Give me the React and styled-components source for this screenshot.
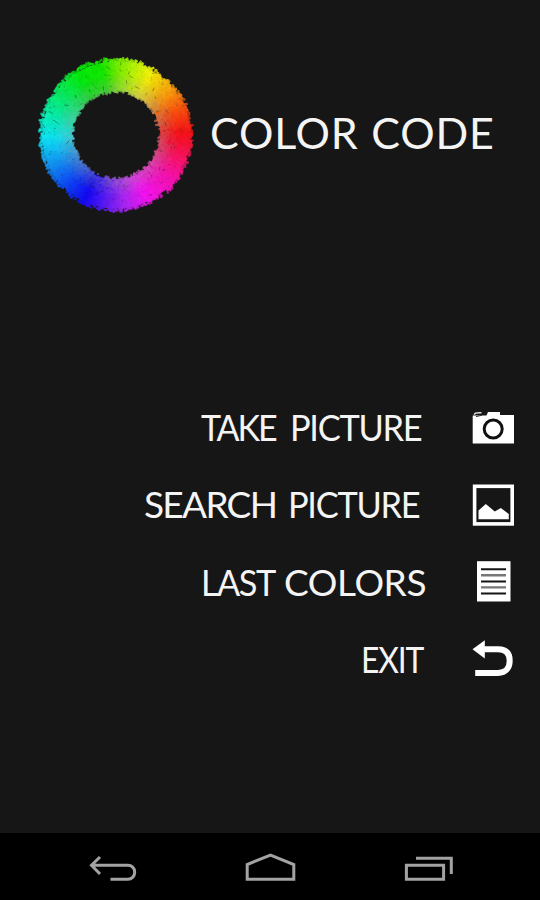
import styled, { createGlobalStyle } from 'styled-components';

const hues = [
  [0, [112, 245, 0]],
  [14, [185, 250, 10]],
  [30, [250, 245, 10]],
  [50, [255, 165, 15]],
  [68, [255, 85, 15]],
  [88, [255, 20, 25]],
  [108, [255, 20, 95]],
  [128, [255, 20, 180]],
  [155, [250, 20, 250]],
  [172, [180, 40, 250]],
  [188, [100, 30, 250]],
  [206, [20, 10, 250]],
  [225, [15, 75, 250]],
  [245, [20, 150, 250]],
  [268, [15, 235, 250]],
  [288, [10, 245, 175]],
  [310, [10, 240, 90]],
  [328, [5, 240, 15]],
  [348, [20, 240, 0]],
  [360, [112, 245, 0]],
];

const hueAt = (angle) => {
  const i = Math.max(hues.findIndex(([a]) => a >= angle), 1);
  const [a1, c1] = hues[i];
  const [a0, c0] = hues[i - 1];
  const t = (angle - a0) / (a1 - a0);
  return c0.map((v, k) => v + (c1[k] - v) * t);
};

const toXY = (angle, radius) => {
  const rad = (angle * Math.PI) / 180;
  return [80 + Math.sin(rad) * radius, 80 - Math.cos(rad) * radius];
};

// solid spokes that the dabs are painted over
const makeSpokes = () => {
  const list = [];
  for (let angle = 0; angle < 360; angle += 2) {
    const [x1, y1] = toXY(angle, 44.5);
    const [x2, y2] = toXY(angle, 73.5);
    const [r, g, b] = hueAt(angle).map(v => Math.round(v * 0.93));
    list.push({ x1, y1, x2, y2, stroke: `rgb(${r},${g},${b})`, strokeWidth: 3.6 });
  }
  return list;
};

const makeDabs = () => {
  let seed = 71;
  const rand = () => {
    seed = (seed * 16807) % 2147483647;
    return seed / 2147483647;
  };
  const list = [];
  for (let i = 0; i < 3800; i++) {
    const angle = (i * 137.508) % 360;
    const radius = Math.sqrt(43 * 43 + rand() * (76.5 * 76.5 - 43 * 43));
    const inner = Math.max(0, (62 - radius) / 18);
    const isDark = rand() < 0.035;
    const shade = isDark ? 0.5 : 0.93 + rand() * 0.07;
    const wash = inner * 0.42;
    const [r, g, b] = hueAt(angle).map(v => Math.round((v * (1 - wash) + 160 * wash) * shade));
    const [x, y] = toXY(angle, radius);
    const turn = rand() * Math.PI * 2;
    const len = 0.8 + rand() * 2.2;
    list.push({
      x1: (x - Math.cos(turn) * len).toFixed(1),
      y1: (y - Math.sin(turn) * len).toFixed(1),
      x2: (x + Math.cos(turn) * len).toFixed(1),
      y2: (y + Math.sin(turn) * len).toFixed(1),
      stroke: `rgb(${r},${g},${b})`,
      strokeWidth: isDark ? 1 : 2.2,
      opacity: 0.7,
    });
  }
  return list;
};

const strokes = [...makeSpokes(), ...makeDabs()];

const ColorRing = () => (
  <Ring viewBox="0 0 160 160">
    {strokes.map((stroke, i) => <line key={i} {...stroke} />)}
  </Ring>
);

const CameraIcon = () => (
  <MenuIcon viewBox="0 0 44 45">
    <path d="M1.7 10.5H15.5L17 7H29V10H43V38.5H1.7Z" fill="#fff" />
    <path d="M3.2 9.6C4 7.6 6 7.4 10.5 7.8" stroke="#ddd" strokeWidth="1.6" fill="none" />
    <path d="M5 11.6L11 10.2" stroke="#333" strokeWidth="1" />
    <circle cx="22.2" cy="24" r="9" fill="#fff" stroke="#111" strokeWidth="3" />
  </MenuIcon>
);

const ImageIcon = () => (
  <MenuIcon viewBox="0 0 44 45">
    <rect x="3.6" y="4.3" width="37.6" height="37.6" fill="none" stroke="#fff" strokeWidth="3.6" />
    <path d="M7.5 37.3V28.5L14.8 22L23.8 29.5L29.8 26L37.8 32V37.3Z" fill="#fff" />
  </MenuIcon>
);

const ListIcon = () => (
  <MenuIcon viewBox="0 0 44 45">
    <rect x="6" y="2.2" width="33.5" height="40.3" fill="#fff" />
    <path d="M10 10.2H35M10 22.5H35M10 34.5H35" stroke="#151515" strokeWidth="2.1" />
    <path d="M10 16.3H35M10 28.4H35" stroke="#777" strokeWidth="2.4" />
  </MenuIcon>
);

const ExitIcon = () => (
  <MenuIcon viewBox="0 0 44 45">
    <path d="M12 13.3H27C35.5 13.3 38.7 18 38.7 24.7C38.7 31.5 35 36.9 27 36.9H4.2" fill="none" stroke="#fff" strokeWidth="6" />
    <path d="M1.5 13.3L13.8 4.3V22.4Z" fill="#fff" />
  </MenuIcon>
);

const picture = { text: 'PICTURE', width: 130, scale: 0.93, spacing: -1.4 };

const items = [
  {
    Icon: CameraIcon,
    gap: 51,
    lift: 2,
    words: [{ text: 'TAKE', width: 77, scale: 0.92, spacing: -2.3 }, picture],
  },
  {
    Icon: ImageIcon,
    gap: 53,
    lift: 2,
    words: [{ text: 'SEARCH', width: 132, scale: 1, spacing: -1.7 }, picture],
  },
  {
    Icon: ListIcon,
    gap: 46,
    lift: 0,
    words: [
      { text: 'LAST', width: 71, scale: 0.93, spacing: -1.7 },
      { text: 'COLORS', width: 141, scale: 1, spacing: -0.4 },
    ],
  },
  {
    Icon: ExitIcon,
    gap: 48,
    lift: 0,
    words: [{ text: 'EXIT', width: 62, scale: 0.86, spacing: -1.3 }],
  },
];

const App = () => {
  return (
    <Screen>
      <GlobalStyle />
      <Header>
        <ColorRing />
        <Title>COLOR CODE</Title>
      </Header>
      <Menu>
        {items.map(({ Icon, gap, lift, words }) => (
          <MenuItem key={words[0].text} $gap={gap}>
            <MenuLabel $lift={lift}>
              {words.map(({ text, width, scale, spacing }) => (
                <Word key={text} $width={width} $scale={scale} $spacing={spacing}>{text}</Word>
              ))}
            </MenuLabel>
            <Icon />
          </MenuItem>
        ))}
      </Menu>
      <NavBar>
        <NavButton aria-label="Back">
          <NavIcon viewBox="0 0 56 32">
            <path d="M16 5L7.5 13.3L16 22M8.5 13.3H44C47.5 13.3 50.7 16 50.7 20.3C50.7 24.5 47.5 27.3 44 27.3H26.5" />
          </NavIcon>
        </NavButton>
        <NavButton aria-label="Home">
          <NavIcon viewBox="0 0 56 32">
            <path d="M4.2 27.3V12.5L27.5 3L50.8 12.5V27.3Z" />
          </NavIcon>
        </NavButton>
        <NavButton aria-label="Recent apps">
          <NavIcon viewBox="0 0 56 32">
            <path d="M5.4 13.3H42.6V27.3H5.4ZM15 6.3H50.3V22" />
          </NavIcon>
        </NavButton>
      </NavBar>
    </Screen>
  );
};

const GlobalStyle = createGlobalStyle`
  body {
    margin: 0;
    background-color: #161616;
  }
`;

const Screen = styled.div`
  width: 540px;
  height: 900px;
  display: flex;
  flex-direction: column;
  overflow: hidden;
  background-color: #161616;
  color: #f4f4f4;
  font-family: Lato, 'Liberation Sans', sans-serif;
`;

const Header = styled.header`
  display: flex;
  align-items: center;
  height: 160px;
  padding: 55px 0 0 36px;
`;

const Ring = styled.svg`
  width: 160px;
  height: 160px;
  flex: none;
`;

const Title = styled.h1`
  margin: 0 0 4px 14px;
  font-size: 43px;
  line-height: 52px;
  font-weight: 400;
  letter-spacing: 0.8px;
  word-spacing: 1px;
  white-space: nowrap;
`;

const Menu = styled.nav`
  display: flex;
  flex-direction: column;
  margin-top: 174px;
`;

const MenuItem = styled.div`
  display: flex;
  align-items: center;
  justify-content: flex-end;
  gap: ${props => props.$gap}px;
  height: 77px;
  padding-right: 25px;
`;

const MenuLabel = styled.span`
  display: flex;
  gap: 12px;
  padding-bottom: ${props => props.$lift}px;
  font-size: 37px;
  line-height: 44px;
  white-space: nowrap;
`;

const Word = styled.span`
  width: ${props => props.$width}px;
  letter-spacing: ${props => props.$spacing}px;
  transform: scaleX(${props => props.$scale});
  transform-origin: left center;
`;

const MenuIcon = styled.svg`
  width: 44px;
  height: 45px;
  flex: none;
`;

const NavBar = styled.footer`
  display: flex;
  justify-content: space-between;
  height: 67px;
  margin-top: auto;
  padding: 0 83px 0 84px;
  background-color: #000;
`;

const NavButton = styled.button`
  width: 56px;
  padding: 19px 0 0;
  border: 0;
  background: none;
  display: flex;
  align-items: flex-start;
`;

const NavIcon = styled.svg`
  width: 56px;
  height: 32px;
  flex: none;
  fill: none;
  stroke: #a3a3a3;
  stroke-width: 3;
`;

export default App;
